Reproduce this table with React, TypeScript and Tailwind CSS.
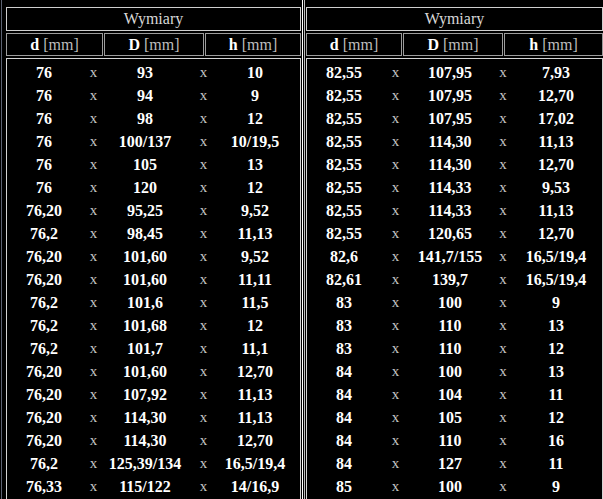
import React from 'react';

type Row = [string, string, string];

const left: Row[] = [
  ['76', '93', '10'],
  ['76', '94', '9'],
  ['76', '98', '12'],
  ['76', '100/137', '10/19,5'],
  ['76', '105', '13'],
  ['76', '120', '12'],
  ['76,20', '95,25', '9,52'],
  ['76,2', '98,45', '11,13'],
  ['76,20', '101,60', '9,52'],
  ['76,20', '101,60', '11,11'],
  ['76,2', '101,6', '11,5'],
  ['76,2', '101,68', '12'],
  ['76,2', '101,7', '11,1'],
  ['76,20', '101,60', '12,70'],
  ['76,20', '107,92', '11,13'],
  ['76,20', '114,30', '11,13'],
  ['76,20', '114,30', '12,70'],
  ['76,2', '125,39/134', '16,5/19,4'],
  ['76,33', '115/122', '14/16,9'],
];

const right: Row[] = [
  ['82,55', '107,95', '7,93'],
  ['82,55', '107,95', '12,70'],
  ['82,55', '107,95', '17,02'],
  ['82,55', '114,30', '11,13'],
  ['82,55', '114,30', '12,70'],
  ['82,55', '114,33', '9,53'],
  ['82,55', '114,33', '11,13'],
  ['82,55', '120,65', '12,70'],
  ['82,6', '141,7/155', '16,5/19,4'],
  ['82,61', '139,7', '16,5/19,4'],
  ['83', '100', '9'],
  ['83', '110', '13'],
  ['83', '110', '12'],
  ['84', '100', '13'],
  ['84', '104', '11'],
  ['84', '105', '12'],
  ['84', '110', '16'],
  ['84', '127', '11'],
  ['85', '100', '9'],
];

const HeadCell = ({ sym, w }: { sym: string; w: string }) => (
  <div className={`${w} h-[23px] border border-[#9c9c9c] flex items-center justify-center text-[16px] leading-none`}>
    <span className="font-bold text-white">{sym}</span>
    <span className="text-[#bdbdbd] ml-[4px]">[mm]</span>
  </div>
);

const SizeTable = ({ rows, heads, cols }: { rows: Row[]; heads: string[]; cols: string }) => (
  <div className="flex flex-col gap-[2px]">
    <div className="h-[24px] border border-[#cfcfcf] flex items-center justify-center text-[16px] text-[#d8d8d8] leading-none">
      Wymiary
    </div>
    <div className="flex justify-between">
      <HeadCell sym="d" w={heads[0]} />
      <HeadCell sym="D" w={heads[1]} />
      <HeadCell sym="h" w={heads[2]} />
    </div>
    <div className="border border-[#d4d4d4] border-b-0 pt-[2px] h-[460px]">
      {rows.map((r, i) => (
        <div key={i} className={`grid ${cols} h-[23px] items-center text-center leading-none`}>
          <span className="font-bold text-white text-[16px]">{r[0]}</span>
          <span className="text-[#c4c4c4] text-[15px]">x</span>
          <span className="font-bold text-white text-[16px]">{r[1]}</span>
          <span className="text-[#c4c4c4] text-[15px]">x</span>
          <span className="font-bold text-white text-[16px]">{r[2]}</span>
        </div>
      ))}
    </div>
  </div>
);

export default function App() {
  return (
    <div className="w-[603px] h-[499px] bg-black overflow-hidden flex font-['Liberation_Serif','Times_New_Roman',serif]">
      <div className="w-[303px] shrink-0 pl-px border-r border-white">
        <div className="border-l border-[#5c6272] h-full pl-[4px] pr-px pt-[7px]">
          <SizeTable
            rows={left}
            heads={['w-[97px]', 'w-[100px]', 'w-[96px]']}
            cols="grid-cols-[74px_25px_78px_39px_64px]"
          />
        </div>
      </div>
      <div className="ml-px border-l border-[#bcbcbc] pl-px pt-[7px] w-[299px] shrink-0">
        <SizeTable
          rows={right}
          heads={['w-[96px]', 'w-[100px]', 'w-[99px]']}
          cols="grid-cols-[74px_29px_80px_26px_80px]"
        />
      </div>
    </div>
  );
}
